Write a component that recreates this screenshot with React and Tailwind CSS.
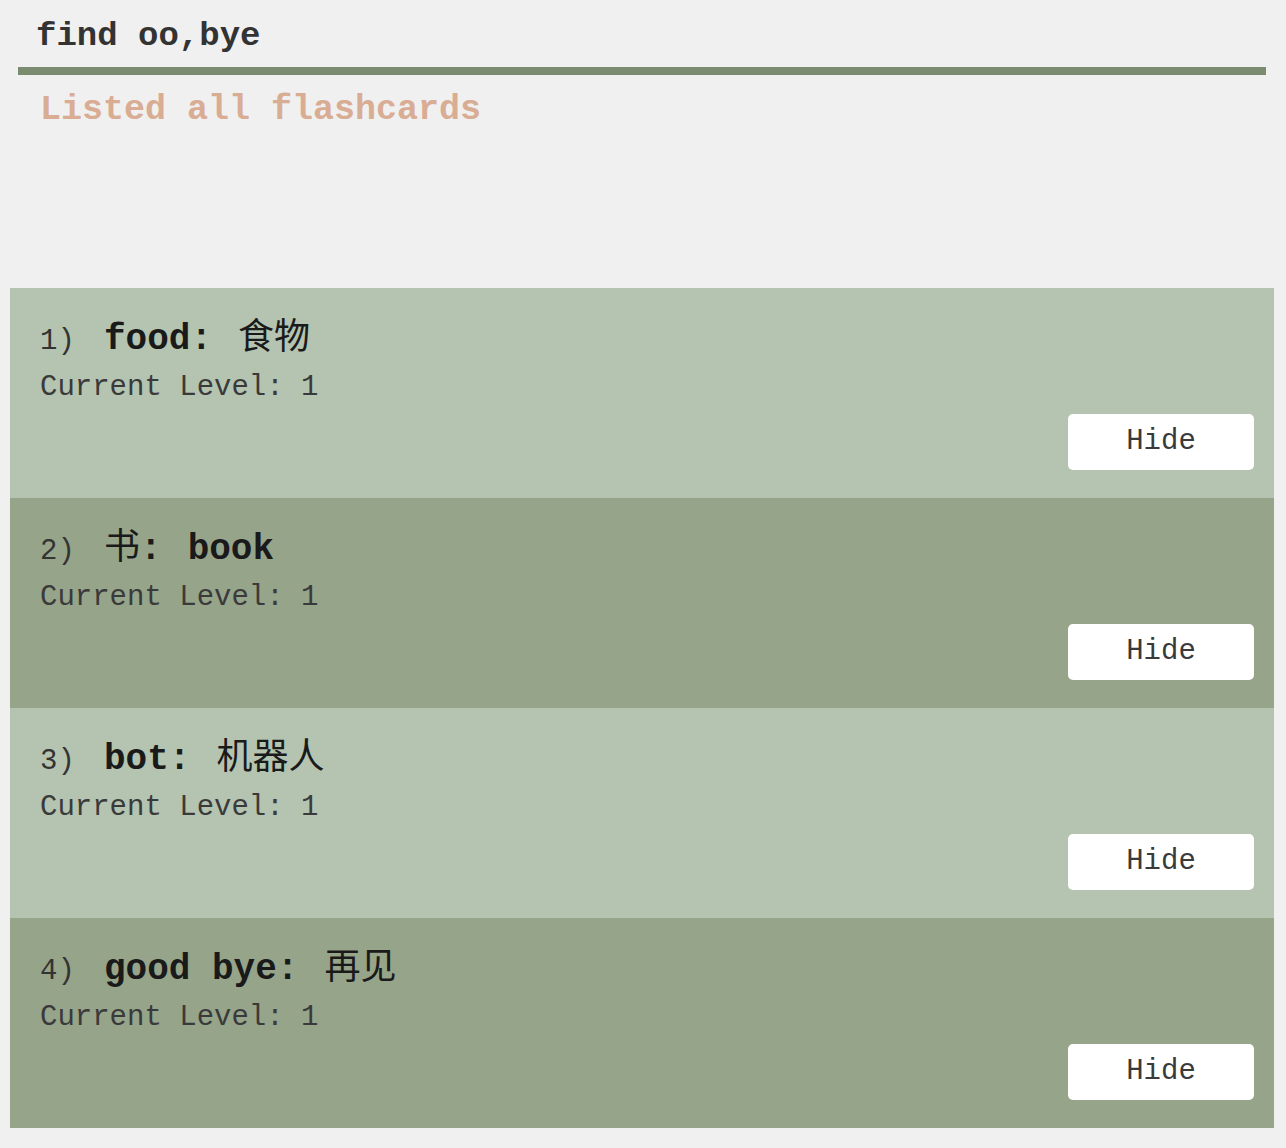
import React from "react";

const cards = [
  { id: 1, front: "food:", back: "食物", frontCjk: false, backCjk: true },
  { id: 2, front: "书", back: "book", frontCjk: true, backCjk: false },
  { id: 3, front: "bot:", back: "机器人", frontCjk: false, backCjk: true },
  { id: 4, front: "good bye:", back: "再见", frontCjk: false, backCjk: true },
];

const mono = { fontFamily: '"Liberation Mono", "Noto Sans CJK SC", monospace' };

function Card({ card, index }) {
  const light = index % 2 === 0;
  return (
    <div
      className={`flex flex-col h-[210px] pl-[30px] pr-[20px] pt-[30px] ${
        light ? "bg-[#b4c4b0]" : "bg-[#96a48a]"
      }`}
    >
      <div className="flex items-baseline h-[44px] leading-[44px] whitespace-pre text-[#1a1a1a]">
        <span className="w-[64px] text-[29px] text-[#333333]">{card.id})</span>
        {card.frontCjk ? (
          <span className="text-[36px]">
            <span className="font-normal">{card.front}</span>
            <span className="font-bold">:</span>
          </span>
        ) : (
          <span className="text-[36px] font-bold">{card.front}</span>
        )}
        <span className={`ml-[26px] text-[36px] ${card.backCjk ? "font-normal" : "font-bold"}`}>
          {card.back}
        </span>
      </div>
      <div className="mt-[8px] h-[36px] leading-[36px] text-[29px] text-[#3a3a3a] whitespace-pre">
        Current Level: 1
      </div>
      <div className="mt-[8px] flex justify-end">
        <button
          className="w-[186px] h-[56px] bg-white rounded-[5px] text-[29px] text-[#3a3a3a] leading-[56px]"
          style={mono}
        >
          Hide
        </button>
      </div>
    </div>
  );
}

export default function App() {
  return (
    <div className="w-[1286px] h-[1148px] bg-[#f0f0f0] overflow-hidden" style={mono}>
      <div className="h-[67px] pt-[16px] pl-[36px]">
        <div className="h-[40px] leading-[40px] text-[34px] font-bold text-[#333333] whitespace-pre">
          find oo,bye
        </div>
      </div>
      <div className="ml-[18px] mr-[20px] h-[8px] bg-[#7b8b6f]" />
      <div className="mt-[15px] pl-[40px] h-[40px] leading-[40px] text-[35px] font-bold text-[#d9ac94] whitespace-pre">
        Listed all flashcards
      </div>
      <div className="mt-[158px] ml-[10px] mr-[12px] flex flex-col">
        {cards.map((c, i) => (
          <Card key={c.id} card={c} index={i} />
        ))}
      </div>
    </div>
  );
}
